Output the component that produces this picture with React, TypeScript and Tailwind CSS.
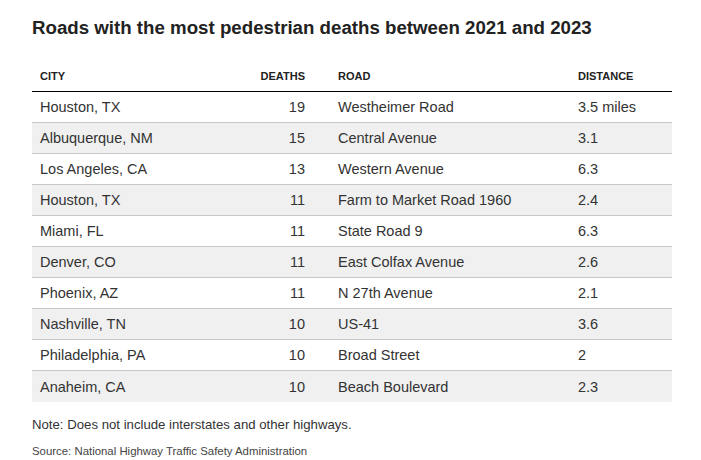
import React from "react";

const rows = [
  ["Houston, TX", "19", "Westheimer Road", "3.5 miles"],
  ["Albuquerque, NM", "15", "Central Avenue", "3.1"],
  ["Los Angeles, CA", "13", "Western Avenue", "6.3"],
  ["Houston, TX", "11", "Farm to Market Road 1960", "2.4"],
  ["Miami, FL", "11", "State Road 9", "6.3"],
  ["Denver, CO", "11", "East Colfax Avenue", "2.6"],
  ["Phoenix, AZ", "11", "N 27th Avenue", "2.1"],
  ["Nashville, TN", "10", "US-41", "3.6"],
  ["Philadelphia, PA", "10", "Broad Street", "2"],
  ["Anaheim, CA", "10", "Beach Boulevard", "2.3"],
];

const cols = "grid grid-cols-[200px_81px_257px_102px]";

export default function App() {
  return (
    <div
      className="min-h-[460px] w-[701px] bg-white pl-[32px] pt-[16px] text-[#222]"
      style={{ fontFamily: '"Liberation Sans", Arial, sans-serif' }}
    >
      <h1 className="text-[18.7px] font-bold leading-[24px] text-[#222]">
        Roads with the most pedestrian deaths between 2021 and 2023
      </h1>

      <div className="mt-[21px] w-[640px]">
        {/* header */}
        <div className={`${cols} h-[31px] items-center border-b border-black text-[11px] font-bold uppercase text-[#222]`}>
          <div className="pl-2">City</div>
          <div className="pr-2 text-right">Deaths</div>
          <div className="pl-[25px]">Road</div>
          <div className="pl-2">Distance</div>
        </div>

        {rows.map((r, i) => (
          <div
            key={i}
            className={`${cols} h-[31px] items-center pt-[2px] text-[14.5px] text-[#333] ${
              i % 2 === 1 ? "bg-[#f0f0f0]" : "bg-white"
            } ${i < rows.length - 1 ? "border-b border-[#c8c8c8]" : "h-[30px]"}`}
          >
            <div className="pl-2">{r[0]}</div>
            <div className="pr-2 text-right">{r[1]}</div>
            <div className="pl-[25px]">{r[2]}</div>
            <div className="pl-2">{r[3]}</div>
          </div>
        ))}
      </div>

      <p className="mt-[14px] text-[13.2px] leading-[18px] text-[#333]">
        Note: Does not include interstates and other highways.
      </p>
      <p className="mt-[9px] text-[11.4px] leading-[16px] text-[#444]">
        Source: National Highway Traffic Safety Administration
      </p>
    </div>
  );
}
